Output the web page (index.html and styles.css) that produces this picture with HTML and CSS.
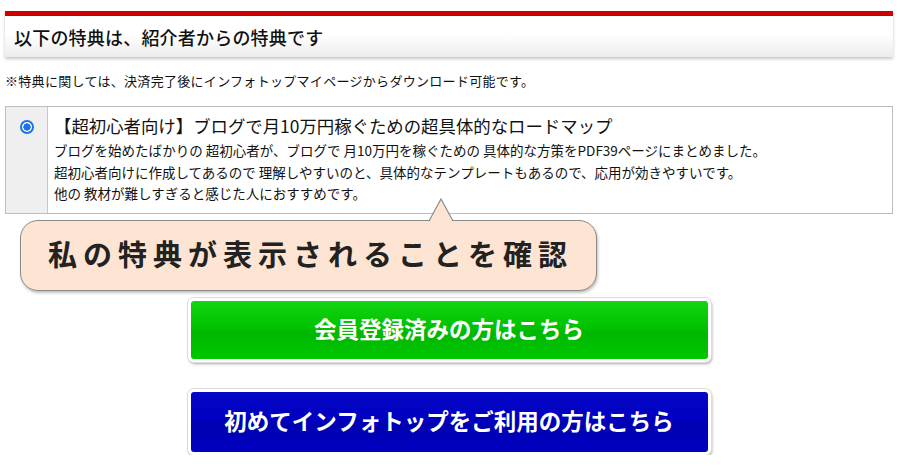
FILE: index.html
```html
<!DOCTYPE html>
<html lang="ja">
<head>
<meta charset="utf-8">
<link rel="stylesheet" href="styles.css">
</head>
<body>
<div class="page">
  <div class="heading">
    <h2 class="heading-text">以下の特典は、紹介者からの特典です</h2>
  </div>
  <p class="note">※特典に関しては、決済完了後にインフォトップマイページからダウンロード可能です。</p>
  <div class="bonus">
    <div class="bonus-check"><span class="radio"></span></div>
    <div class="bonus-body">
      <div class="bonus-title">【超初心者向け】ブログで月10万円稼ぐための超具体的なロードマップ</div>
      <div class="bonus-desc">ブログを始めたばかりの 超初心者が、ブログで 月10万円を稼ぐための 具体的な方策をPDF39ページにまとめました。<br>超初心者向けに作成してあるので 理解しやすいのと、具体的なテンプレートもあるので、応用が効きやすいです。<br>他の 教材が難しすぎると感じた人におすすめです。</div>
    </div>
  </div>
  <div class="callout">
    <svg class="callout-tip" width="26" height="24" viewBox="0 0 26 24"><polygon points="1,24 13,1 25,24" fill="#fde4d3"/><polyline points="1,23 13,1 25,23" fill="none" stroke="#8a8a8a" stroke-width="1.2"/></svg>
    <span class="callout-text">私の特典が表示されることを確認</span>
  </div>
  <div class="buttons">
    <a class="btn btn-green">会員登録済みの方はこちら</a>
    <a class="btn btn-blue">初めてインフォトップをご利用の方はこちら</a>
  </div>
</div>
</body>
</html>
```

FILE: styles.css
```css
html, body {
  margin: 0;
  padding: 0;
  background: #ffffff;
}
body {
  font-family: "Noto Sans CJK JP", "Liberation Sans", sans-serif;
  color: #111;
}
.page {
  padding: 11px 8px 0 5px;
  width: 888px;
}
.heading {
  border-top: 5px solid #cc0000;
  height: 41px;
  background: linear-gradient(#ffffff 0%, #ffffff 45%, #ececec 100%);
  box-shadow: 0 2px 3px rgba(0,0,0,0.22);
  display: flex;
  align-items: center;
  padding-left: 9px;
}
.heading-text {
  margin: 0;
  font-size: 18px;
  font-weight: 500;
  line-height: 1;
  color: #111;
  letter-spacing: 0.2px;
}
.note {
  margin: 15px 0 0 0;
  font-size: 13px;
  line-height: 18px;
  letter-spacing: 0.3px;
  color: #111;
}
.bonus {
  margin-top: 16px;
  border: 1px solid #bdbdbd;
  display: flex;
  height: 106px;
}
.bonus-check {
  width: 42px;
  background: #efefef;
  border-right: 1px solid #c8c8c8;
  display: flex;
  justify-content: center;
  padding-top: 13px;
  box-sizing: border-box;
}
.radio {
  width: 14px;
  height: 14px;
  border-radius: 50%;
  border: 2px solid #1a73e8;
  box-sizing: border-box;
  background: radial-gradient(circle, #1a73e8 0 3.4px, #ffffff 3.9px);
}
.bonus-body {
  padding: 7px 0 0 6px;
}
.bonus-title {
  font-size: 17.4px;
  line-height: 24px;
  color: #111;
}
.bonus-desc {
  margin-top: 2px;
  font-size: 13.5px;
  line-height: 21.5px;
  color: #111;
}
.callout {
  position: relative;
  margin: 6px 0 0 15px;
  width: 577px;
  height: 71px;
  box-sizing: border-box;
  border: 1px solid #8a8a8a;
  border-radius: 18px;
  background: #fde4d3;
  box-shadow: 1px 2px 3px rgba(0,0,0,0.25);
  display: flex;
  align-items: center;
  justify-content: center;
}
.callout-tip {
  position: absolute;
  top: -23px;
  left: 407px;
  display: block;
}
.callout-text {
  font-size: 29px;
  font-weight: 700;
  letter-spacing: 6px;
  color: #222;
  padding-bottom: 6px;
  padding-left: 4px;
}
.buttons {
  display: flex;
  flex-direction: column;
  align-items: center;
  gap: 27px;
  margin-top: 7px;
}
.btn {
  display: flex;
  align-items: center;
  justify-content: center;
  width: 523px;
  height: 64px;
  box-sizing: border-box;
  border: 3px solid #ffffff;
  border-radius: 6px;
  box-shadow: 0 0 0 1px #dcdcdc, 1px 2px 3px rgba(0,0,0,0.35);
  color: #ffffff;
  font-size: 22.5px;
  font-weight: 700;
  text-decoration: none;
  padding-bottom: 5px;
}
.btn-green {
  background: linear-gradient(#14d414 0%, #00c300 45%, #00b700 55%, #00c800 100%);
}
.btn-blue {
  height: 66px;
  background: linear-gradient(#0606c8 0%, #0000c0 45%, #0000b2 55%, #0000c2 100%);
}
```
